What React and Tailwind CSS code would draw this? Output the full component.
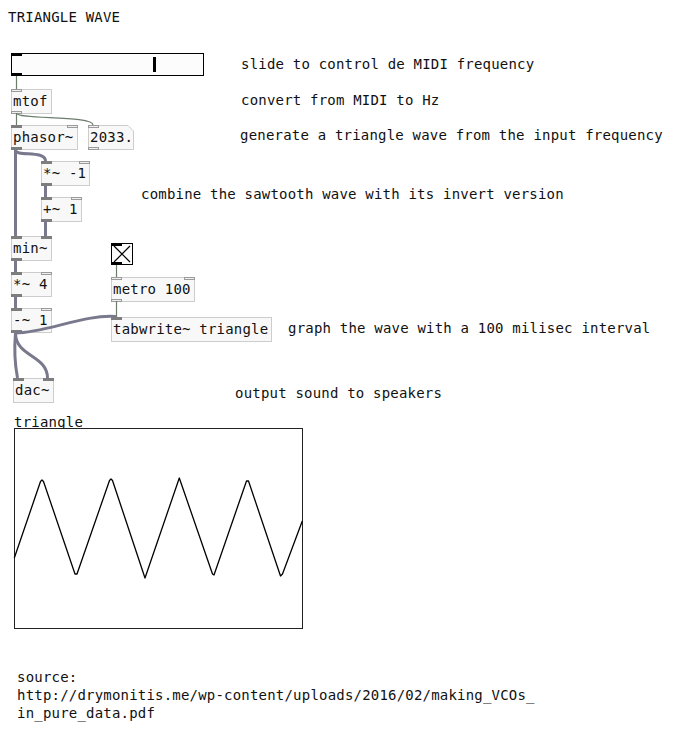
import React from "react";

const POS = {
  tl: "-left-px -top-px",
  tr: "-right-px -top-px",
  bl: "-left-px -bottom-px",
};
const KIND = {
  sig: "bg-[#7d7d7d]",
  ctl: "bg-[#eeeeee] border border-[#9b9b9b]",
};

function Port({ kind, pos }) {
  return <div className={"absolute w-[11px] h-[3px] " + POS[pos] + " " + KIND[kind]} />;
}

function Box({ className, children, ports = [] }) {
  return (
    <div
      className={
        "absolute h-[25px] border border-[#cdcdcd] bg-[#f8f8f8] pl-px leading-[23px] whitespace-pre " +
        className
      }
    >
      {children}
      {ports.map(([k, p], i) => (
        <Port key={i} kind={k} pos={p} />
      ))}
    </div>
  );
}

function Comment({ className, children }) {
  return <div className={"absolute leading-4 whitespace-pre " + className}>{children}</div>;
}

export default function App() {
  return (
    <div className="relative w-[680px] h-[742px] overflow-hidden bg-white text-[#111] text-[14px] tracking-[0.2px] font-['DejaVu_Sans_Mono',monospace]">
      {/* comments */}
      <Comment className="left-[8px] top-[9px]">TRIANGLE WAVE</Comment>
      <Comment className="left-[241px] top-[56px]">slide to control de MIDI frequency</Comment>
      <Comment className="left-[241px] top-[92px]">convert from MIDI to Hz</Comment>
      <Comment className="left-[240px] top-[127px]">generate a triangle wave from the input frequency</Comment>
      <Comment className="left-[141px] top-[186px]">combine the sawtooth wave with its invert version</Comment>
      <Comment className="left-[288px] top-[320px]">graph the wave with a 100 milisec interval</Comment>
      <Comment className="left-[235px] top-[385px]">output sound to speakers</Comment>
      <div className="absolute left-[17px] top-[668px] leading-[18px] whitespace-pre">
        {"source:\nhttp://drymonitis.me/wp-content/uploads/2016/02/making_VCOs_\nin_pure_data.pdf"}
      </div>

      {/* slider */}
      <div className="absolute left-[11px] top-[53px] w-[193px] h-[23px] border border-black bg-[#fcfcfc]">
        <div className="absolute -left-px -top-px w-[11px] h-[3px] bg-black" />
        <div className="absolute -left-px -bottom-px w-[11px] h-[3px] bg-black" />
        <div className="absolute left-[141px] top-[3px] w-[3px] h-[15px] bg-black" />
      </div>

      {/* toggle */}
      <div className="absolute left-[111px] top-[243px] w-[22px] h-[22px] border border-black bg-[#fcfcfc]">
        <div className="absolute -left-px -top-px w-[11px] h-[3px] bg-black" />
        <div className="absolute -left-px -bottom-px w-[11px] h-[3px] bg-black" />
        <svg className="absolute left-0 top-0 w-[20px] h-[20px]" viewBox="0 0 20 20">
          <path d="M2 2 L18 18 M18 2 L2 18" stroke="#000" strokeWidth="1.2" />
        </svg>
      </div>

      {/* objects */}
      <Box className="left-[11px] top-[89px] w-[41px]" ports={[["ctl", "tl"], ["ctl", "bl"]]}>mtof</Box>
      <Box className="left-[11px] top-[125px] w-[67px]" ports={[["sig", "tl"], ["ctl", "tr"], ["sig", "bl"]]}>phasor~</Box>
      <div className="absolute left-[88px] top-[125px] w-[46px] h-[25px] pl-[2px] leading-[25px] whitespace-pre">
        <svg className="absolute left-0 top-0 w-[46px] h-[25px]" viewBox="0 0 46 25">
          <polygon points="0.5,0.5 40,0.5 45.5,6 45.5,24.5 0.5,24.5" fill="#f8f8f8" stroke="#cdcdcd" />
        </svg>
        <span className="relative">2033.</span>
        <div className="absolute left-0 top-0 w-[11px] h-[3px] bg-[#eeeeee] border border-[#9b9b9b]" />
        <div className="absolute left-0 bottom-0 w-[11px] h-[3px] bg-[#eeeeee] border border-[#9b9b9b]" />
      </div>
      <Box className="left-[41px] top-[161px] w-[49px]" ports={[["sig", "tl"], ["ctl", "tr"], ["sig", "bl"]]}>*~ -1</Box>
      <Box className="left-[41px] top-[197px] w-[41px]" ports={[["sig", "tl"], ["ctl", "tr"], ["sig", "bl"]]}>+~ 1</Box>
      <Box className="left-[11px] top-[236px] w-[41px]" ports={[["sig", "tl"], ["sig", "tr"], ["sig", "bl"]]}>min~</Box>
      <Box className="left-[11px] top-[272px] w-[41px]" ports={[["sig", "tl"], ["ctl", "tr"], ["sig", "bl"]]}>*~ 4</Box>
      <Box className="left-[11px] top-[308px] w-[41px]" ports={[["sig", "tl"], ["ctl", "tr"], ["sig", "bl"]]}>-~ 1</Box>
      <Box className="left-[111px] top-[277px] w-[84px]" ports={[["ctl", "tl"], ["ctl", "tr"], ["ctl", "bl"]]}>metro 100</Box>
      <Box className="left-[111px] top-[317px] w-[161px]" ports={[["sig", "tl"]]}>tabwrite~ triangle</Box>
      <Box className="left-[13px] top-[378px] w-[41px]" ports={[["sig", "tl"], ["sig", "tr"]]}>dac~</Box>

      {/* cords (drawn over the boxes, as in Pd) */}
      <svg className="absolute left-0 top-0 w-[680px] h-[742px] pointer-events-none" viewBox="0 0 680 742" fill="none">
        <g stroke="#6c7d6c" strokeWidth="1.2">
          <path d="M16.5 76 L16.5 89" />
          <path d="M16.5 113 L16.5 125" />
          <path d="M16.5 113 C16.5 120, 93 115, 93 125" />
          <path d="M116.5 265 L116.5 277" />
          <path d="M116.5 301 L116.5 317" />
        </g>
        <g stroke="#79798d" strokeWidth="3" strokeLinecap="butt">
          <path d="M15.5 150 L15.5 236" />
          <path d="M15.5 150 C15.5 157, 45.5 150, 45.5 161" />
          <path d="M45.5 186 L45.5 197" />
          <path d="M45.5 221 L45.5 236" />
          <path d="M15.5 261 L15.5 272" />
          <path d="M15.5 297 L15.5 308" />
          <path d="M15.5 333 C45 333, 85 314, 116 316.5" />
          <path d="M15.5 333 C14 350, 15 365, 17.5 378" />
          <path d="M15.5 333 C15.5 357, 47.5 355, 47.5 378" />
        </g>
      </svg>

      {/* graph */}
      <div className="absolute left-[14px] top-[414px] leading-4">triangle</div>
      <div className="absolute left-[14px] top-[428px] w-[289px] h-[201px] border border-[#222] bg-white">
        <svg className="absolute -left-px -top-px w-[289px] h-[201px] overflow-visible" viewBox="0 0 289 201" fill="none">
          <polyline
            points="0.3,130 26.5,53.5 28,52 29.5,53.5 61,146 63,146 95.5,52.5 97,51 98.5,52.5 131,150 165.3,50 198.5,146 200,147 232.5,53 234.5,53 266.5,148 268.5,146 288.3,93"
            stroke="#000"
            strokeWidth="1.3"
            strokeLinejoin="round"
          />
        </svg>
      </div>
    </div>
  );
}
